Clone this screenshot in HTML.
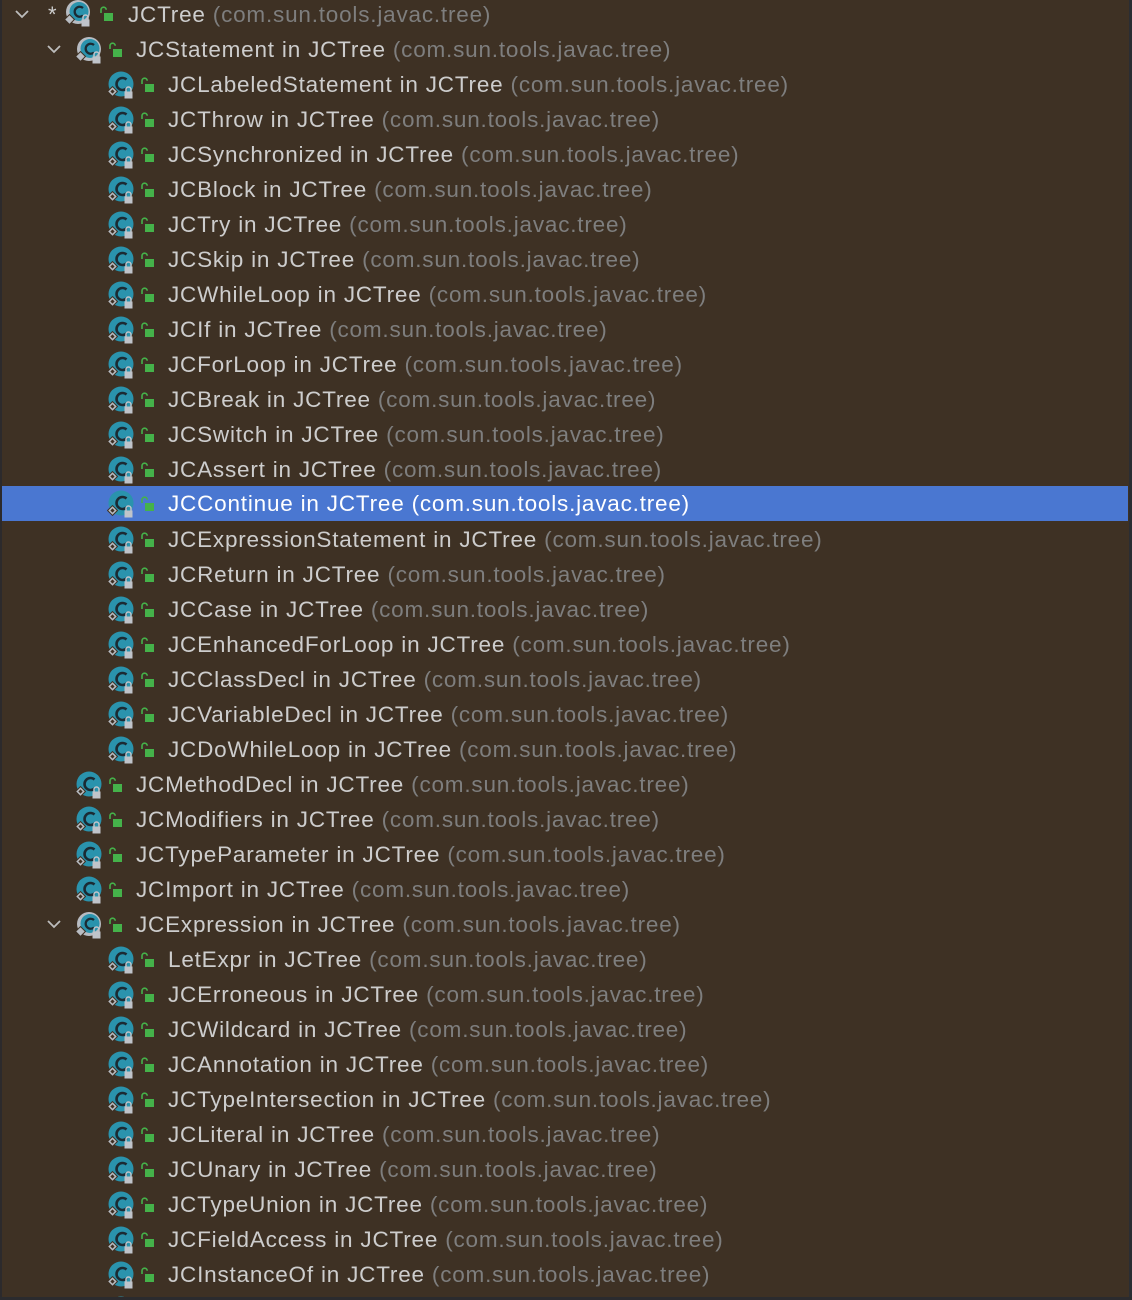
<!DOCTYPE html>
<html><head><meta charset="utf-8">
<style>
html,body{margin:0;padding:0;width:1132px;height:1300px;overflow:hidden;}
body{background:#3e3124;position:relative;font-family:"Liberation Sans",sans-serif;}
.edgeL{position:absolute;left:0;top:0;width:2px;height:1300px;background:#2c2a2c;}
.edgeR{position:absolute;right:0;top:0;width:3px;height:1300px;background:#2a2d33;}
.edgeB{position:absolute;left:0;bottom:0;width:1132px;height:3px;background:#2b2b2e;}
.row{position:absolute;left:0;width:1132px;height:35px;}
.row.sel{background:#4a77d1;left:2px;width:1126px;}
.t{position:absolute;top:0;line-height:35px;font-size:22.5px;color:#cdcdcd;white-space:nowrap;letter-spacing:0.8px;}
.t span{color:#7e7e7e;}
.sel .t, .sel .t span{color:#ffffff;}
.ic{position:absolute;top:4px;width:30px;height:30px;}
.lk{position:absolute;top:10px;width:16px;height:16px;}
.arr{position:absolute;top:8px;width:18px;height:18px;}
.star{position:absolute;top:0;line-height:32px;font-size:22px;color:#cdcdcd;}
</style></head><body>
<svg width="0" height="0" style="position:absolute">
<defs>
<symbol id="cls" viewBox="0 0 30 30">
<circle cx="14" cy="13" r="12.5" fill="#2a93ad"/>
<path d="M19.5 8.5 A6 6 0 1 0 19.5 17.5" fill="none" stroke="#1b2a33" stroke-width="2.6"/>
<rect x="2" y="17" width="7" height="7" transform="rotate(45 5.5 20.5)" fill="#b8bcc2" stroke="#3e3124" stroke-width="1"/>
<rect x="4" y="19" width="3" height="3" transform="rotate(45 5.5 20.5)" fill="#3e3124"/>
<path d="M19 21 v-2.5 a2.5 2.5 0 0 1 5 0 v2.5" fill="none" stroke="#c0c4ca" stroke-width="1.5"/>
<rect x="17.5" y="20.5" width="8" height="7" fill="#c0c4ca"/>
</symbol>
<symbol id="acls" viewBox="0 0 30 30">
<circle cx="14" cy="13" r="12" fill="#b8bcc2"/>
<circle cx="15" cy="12.5" r="9.5" fill="#2a93ad"/>
<path d="M19 9 A5 5 0 1 0 19 16.5" fill="none" stroke="#1b2a33" stroke-width="2.3"/>
<rect x="2" y="17" width="7" height="7" transform="rotate(45 5.5 20.5)" fill="#b8bcc2" stroke="#3e3124" stroke-width="1"/>
<path d="M19 21 v-2.5 a2.5 2.5 0 0 1 5 0 v2.5" fill="none" stroke="#c0c4ca" stroke-width="1.5"/>
<rect x="17.5" y="20.5" width="8" height="7" fill="#c0c4ca"/>
</symbol>
<symbol id="lock" viewBox="0 0 16 16">
<path d="M2 7 V3.8 a2.6 2.6 0 0 1 5.2 0" fill="none" stroke="#45b24a" stroke-width="1.6"/>
<rect x="5" y="7" width="9" height="8" fill="#45b24a"/>
</symbol>
<symbol id="chev" viewBox="0 0 18 18">
<path d="M3 6 L9 12 L15 6" fill="none" stroke="#bdbdbd" stroke-width="1.8"/>
</symbol>
</defs>
</svg>

<div class="row" style="top:-3px">
<svg class="arr" style="left:13px"><use href="#chev"/></svg>
<div class="star" style="left:48px;top:2px">*</div>
<svg class="ic" style="left:64px;top:2px"><use href="#acls"/></svg>
<svg class="lk" style="left:99px;top:9px"><use href="#lock"/></svg>
<div class="t" style="left:128px">JCTree <span>(com.sun.tools.javac.tree)</span></div>
</div>
<div class="row" style="top:32px">
<svg class="arr" style="left:45px"><use href="#chev"/></svg>
<svg class="ic" style="left:75px"><use href="#acls"/></svg>
<svg class="lk" style="left:108px"><use href="#lock"/></svg>
<div class="t" style="left:136px">JCStatement in JCTree <span>(com.sun.tools.javac.tree)</span></div>
</div>

<div class="row" style="top:67px"><svg class="ic" style="left:107px"><use href="#cls"/></svg><svg class="lk" style="left:140px"><use href="#lock"/></svg><div class="t" style="left:168px">JCLabeledStatement in JCTree <span>(com.sun.tools.javac.tree)</span></div></div>
<div class="row" style="top:102px"><svg class="ic" style="left:107px"><use href="#cls"/></svg><svg class="lk" style="left:140px"><use href="#lock"/></svg><div class="t" style="left:168px">JCThrow in JCTree <span>(com.sun.tools.javac.tree)</span></div></div>
<div class="row" style="top:137px"><svg class="ic" style="left:107px"><use href="#cls"/></svg><svg class="lk" style="left:140px"><use href="#lock"/></svg><div class="t" style="left:168px">JCSynchronized in JCTree <span>(com.sun.tools.javac.tree)</span></div></div>
<div class="row" style="top:172px"><svg class="ic" style="left:107px"><use href="#cls"/></svg><svg class="lk" style="left:140px"><use href="#lock"/></svg><div class="t" style="left:168px">JCBlock in JCTree <span>(com.sun.tools.javac.tree)</span></div></div>
<div class="row" style="top:207px"><svg class="ic" style="left:107px"><use href="#cls"/></svg><svg class="lk" style="left:140px"><use href="#lock"/></svg><div class="t" style="left:168px">JCTry in JCTree <span>(com.sun.tools.javac.tree)</span></div></div>
<div class="row" style="top:242px"><svg class="ic" style="left:107px"><use href="#cls"/></svg><svg class="lk" style="left:140px"><use href="#lock"/></svg><div class="t" style="left:168px">JCSkip in JCTree <span>(com.sun.tools.javac.tree)</span></div></div>
<div class="row" style="top:277px"><svg class="ic" style="left:107px"><use href="#cls"/></svg><svg class="lk" style="left:140px"><use href="#lock"/></svg><div class="t" style="left:168px">JCWhileLoop in JCTree <span>(com.sun.tools.javac.tree)</span></div></div>
<div class="row" style="top:312px"><svg class="ic" style="left:107px"><use href="#cls"/></svg><svg class="lk" style="left:140px"><use href="#lock"/></svg><div class="t" style="left:168px">JCIf in JCTree <span>(com.sun.tools.javac.tree)</span></div></div>
<div class="row" style="top:347px"><svg class="ic" style="left:107px"><use href="#cls"/></svg><svg class="lk" style="left:140px"><use href="#lock"/></svg><div class="t" style="left:168px">JCForLoop in JCTree <span>(com.sun.tools.javac.tree)</span></div></div>
<div class="row" style="top:382px"><svg class="ic" style="left:107px"><use href="#cls"/></svg><svg class="lk" style="left:140px"><use href="#lock"/></svg><div class="t" style="left:168px">JCBreak in JCTree <span>(com.sun.tools.javac.tree)</span></div></div>
<div class="row" style="top:417px"><svg class="ic" style="left:107px"><use href="#cls"/></svg><svg class="lk" style="left:140px"><use href="#lock"/></svg><div class="t" style="left:168px">JCSwitch in JCTree <span>(com.sun.tools.javac.tree)</span></div></div>
<div class="row" style="top:452px"><svg class="ic" style="left:107px"><use href="#cls"/></svg><svg class="lk" style="left:140px"><use href="#lock"/></svg><div class="t" style="left:168px">JCAssert in JCTree <span>(com.sun.tools.javac.tree)</span></div></div>
<div class="row sel" style="top:486px"><svg class="ic" style="left:105px"><use href="#cls"/></svg><svg class="lk" style="left:138px"><use href="#lock"/></svg><div class="t" style="left:166px">JCContinue in JCTree <span>(com.sun.tools.javac.tree)</span></div></div>
<div class="row" style="top:522px"><svg class="ic" style="left:107px"><use href="#cls"/></svg><svg class="lk" style="left:140px"><use href="#lock"/></svg><div class="t" style="left:168px">JCExpressionStatement in JCTree <span>(com.sun.tools.javac.tree)</span></div></div>
<div class="row" style="top:557px"><svg class="ic" style="left:107px"><use href="#cls"/></svg><svg class="lk" style="left:140px"><use href="#lock"/></svg><div class="t" style="left:168px">JCReturn in JCTree <span>(com.sun.tools.javac.tree)</span></div></div>
<div class="row" style="top:592px"><svg class="ic" style="left:107px"><use href="#cls"/></svg><svg class="lk" style="left:140px"><use href="#lock"/></svg><div class="t" style="left:168px">JCCase in JCTree <span>(com.sun.tools.javac.tree)</span></div></div>
<div class="row" style="top:627px"><svg class="ic" style="left:107px"><use href="#cls"/></svg><svg class="lk" style="left:140px"><use href="#lock"/></svg><div class="t" style="left:168px">JCEnhancedForLoop in JCTree <span>(com.sun.tools.javac.tree)</span></div></div>
<div class="row" style="top:662px"><svg class="ic" style="left:107px"><use href="#cls"/></svg><svg class="lk" style="left:140px"><use href="#lock"/></svg><div class="t" style="left:168px">JCClassDecl in JCTree <span>(com.sun.tools.javac.tree)</span></div></div>
<div class="row" style="top:697px"><svg class="ic" style="left:107px"><use href="#cls"/></svg><svg class="lk" style="left:140px"><use href="#lock"/></svg><div class="t" style="left:168px">JCVariableDecl in JCTree <span>(com.sun.tools.javac.tree)</span></div></div>
<div class="row" style="top:732px"><svg class="ic" style="left:107px"><use href="#cls"/></svg><svg class="lk" style="left:140px"><use href="#lock"/></svg><div class="t" style="left:168px">JCDoWhileLoop in JCTree <span>(com.sun.tools.javac.tree)</span></div></div>

<div class="row" style="top:767px"><svg class="ic" style="left:75px"><use href="#cls"/></svg><svg class="lk" style="left:108px"><use href="#lock"/></svg><div class="t" style="left:136px">JCMethodDecl in JCTree <span>(com.sun.tools.javac.tree)</span></div></div>
<div class="row" style="top:802px"><svg class="ic" style="left:75px"><use href="#cls"/></svg><svg class="lk" style="left:108px"><use href="#lock"/></svg><div class="t" style="left:136px">JCModifiers in JCTree <span>(com.sun.tools.javac.tree)</span></div></div>
<div class="row" style="top:837px"><svg class="ic" style="left:75px"><use href="#cls"/></svg><svg class="lk" style="left:108px"><use href="#lock"/></svg><div class="t" style="left:136px">JCTypeParameter in JCTree <span>(com.sun.tools.javac.tree)</span></div></div>
<div class="row" style="top:872px"><svg class="ic" style="left:75px"><use href="#cls"/></svg><svg class="lk" style="left:108px"><use href="#lock"/></svg><div class="t" style="left:136px">JCImport in JCTree <span>(com.sun.tools.javac.tree)</span></div></div>
<div class="row" style="top:907px">
<svg class="arr" style="left:45px"><use href="#chev"/></svg>
<svg class="ic" style="left:75px"><use href="#acls"/></svg><svg class="lk" style="left:108px"><use href="#lock"/></svg><div class="t" style="left:136px">JCExpression in JCTree <span>(com.sun.tools.javac.tree)</span></div></div>

<div class="row" style="top:942px"><svg class="ic" style="left:107px"><use href="#cls"/></svg><svg class="lk" style="left:140px"><use href="#lock"/></svg><div class="t" style="left:168px">LetExpr in JCTree <span>(com.sun.tools.javac.tree)</span></div></div>
<div class="row" style="top:977px"><svg class="ic" style="left:107px"><use href="#cls"/></svg><svg class="lk" style="left:140px"><use href="#lock"/></svg><div class="t" style="left:168px">JCErroneous in JCTree <span>(com.sun.tools.javac.tree)</span></div></div>
<div class="row" style="top:1012px"><svg class="ic" style="left:107px"><use href="#cls"/></svg><svg class="lk" style="left:140px"><use href="#lock"/></svg><div class="t" style="left:168px">JCWildcard in JCTree <span>(com.sun.tools.javac.tree)</span></div></div>
<div class="row" style="top:1047px"><svg class="ic" style="left:107px"><use href="#cls"/></svg><svg class="lk" style="left:140px"><use href="#lock"/></svg><div class="t" style="left:168px">JCAnnotation in JCTree <span>(com.sun.tools.javac.tree)</span></div></div>
<div class="row" style="top:1082px"><svg class="ic" style="left:107px"><use href="#cls"/></svg><svg class="lk" style="left:140px"><use href="#lock"/></svg><div class="t" style="left:168px">JCTypeIntersection in JCTree <span>(com.sun.tools.javac.tree)</span></div></div>
<div class="row" style="top:1117px"><svg class="ic" style="left:107px"><use href="#cls"/></svg><svg class="lk" style="left:140px"><use href="#lock"/></svg><div class="t" style="left:168px">JCLiteral in JCTree <span>(com.sun.tools.javac.tree)</span></div></div>
<div class="row" style="top:1152px"><svg class="ic" style="left:107px"><use href="#cls"/></svg><svg class="lk" style="left:140px"><use href="#lock"/></svg><div class="t" style="left:168px">JCUnary in JCTree <span>(com.sun.tools.javac.tree)</span></div></div>
<div class="row" style="top:1187px"><svg class="ic" style="left:107px"><use href="#cls"/></svg><svg class="lk" style="left:140px"><use href="#lock"/></svg><div class="t" style="left:168px">JCTypeUnion in JCTree <span>(com.sun.tools.javac.tree)</span></div></div>
<div class="row" style="top:1222px"><svg class="ic" style="left:107px"><use href="#cls"/></svg><svg class="lk" style="left:140px"><use href="#lock"/></svg><div class="t" style="left:168px">JCFieldAccess in JCTree <span>(com.sun.tools.javac.tree)</span></div></div>
<div class="row" style="top:1257px"><svg class="ic" style="left:107px"><use href="#cls"/></svg><svg class="lk" style="left:140px"><use href="#lock"/></svg><div class="t" style="left:168px">JCInstanceOf in JCTree <span>(com.sun.tools.javac.tree)</span></div></div>
<div class="row" style="top:1292px;height:8px;overflow:hidden"><svg class="ic" style="left:107px"><use href="#cls"/></svg></div>

<div class="edgeL"></div><div class="edgeR"></div><div class="edgeB"></div>
</body></html>
